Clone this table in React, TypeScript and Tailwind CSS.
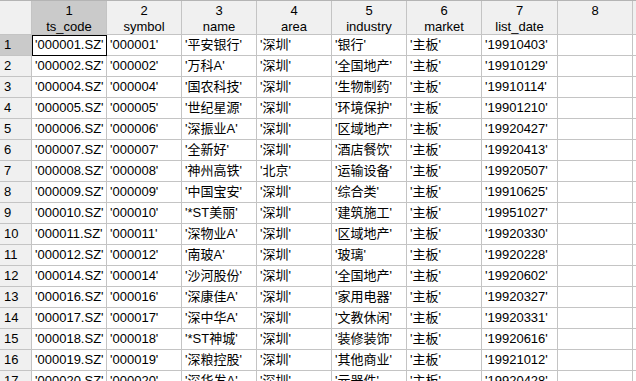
const rows: string[][] = [
  ["'000001.SZ'", "'000001'", "'平安银行'", "'深圳'", "'银行'", "'主板'", "'19910403'"],
  ["'000002.SZ'", "'000002'", "'万科A'", "'深圳'", "'全国地产'", "'主板'", "'19910129'"],
  ["'000004.SZ'", "'000004'", "'国农科技'", "'深圳'", "'生物制药'", "'主板'", "'19910114'"],
  ["'000005.SZ'", "'000005'", "'世纪星源'", "'深圳'", "'环境保护'", "'主板'", "'19901210'"],
  ["'000006.SZ'", "'000006'", "'深振业A'", "'深圳'", "'区域地产'", "'主板'", "'19920427'"],
  ["'000007.SZ'", "'000007'", "'全新好'", "'深圳'", "'酒店餐饮'", "'主板'", "'19920413'"],
  ["'000008.SZ'", "'000008'", "'神州高铁'", "'北京'", "'运输设备'", "'主板'", "'19920507'"],
  ["'000009.SZ'", "'000009'", "'中国宝安'", "'深圳'", "'综合类'", "'主板'", "'19910625'"],
  ["'000010.SZ'", "'000010'", "'*ST美丽'", "'深圳'", "'建筑施工'", "'主板'", "'19951027'"],
  ["'000011.SZ'", "'000011'", "'深物业A'", "'深圳'", "'区域地产'", "'主板'", "'19920330'"],
  ["'000012.SZ'", "'000012'", "'南玻A'", "'深圳'", "'玻璃'", "'主板'", "'19920228'"],
  ["'000014.SZ'", "'000014'", "'沙河股份'", "'深圳'", "'全国地产'", "'主板'", "'19920602'"],
  ["'000016.SZ'", "'000016'", "'深康佳A'", "'深圳'", "'家用电器'", "'主板'", "'19920327'"],
  ["'000017.SZ'", "'000017'", "'深中华A'", "'深圳'", "'文教休闲'", "'主板'", "'19920331'"],
  ["'000018.SZ'", "'000018'", "'*ST神城'", "'深圳'", "'装修装饰'", "'主板'", "'19920616'"],
  ["'000019.SZ'", "'000019'", "'深粮控股'", "'深圳'", "'其他商业'", "'主板'", "'19921012'"],
  ["'000020.SZ'", "'000020'", "'深华发A'", "'深圳'", "'元器件'", "'主板'", "'19920428'"],
];

const cols = ["ts_code", "symbol", "name", "area", "industry", "market", "list_date", ""];
const widths = ["w-[75px]", "w-[75px]", "w-[75px]", "w-[75px]", "w-[75px]", "w-[75px]", "w-[76px]", "w-[75px]"];

export default function App() {
  return (
    <div
      className="w-[636px] h-[381px] overflow-hidden bg-white text-[13px] text-black"
      style={{ fontFamily: '"Liberation Sans", "Noto Sans CJK SC", sans-serif' }}
    >
      {/* header */}
      <div className="flex h-[35px] border-t border-[#b4b4b4] bg-[#f0f0f0]">
        <div className="w-[32px] shrink-0 border-r border-b border-[#c4c4c4]"></div>
        {cols.map((c, i) => (
          <div
            key={i}
            className={`${widths[i]} shrink-0 border-r border-b border-[#c4c4c4] text-center leading-[16px] pt-[2px] ${i === 0 ? "bg-[#cacaca]" : ""}`}
          >
            <div>{i + 1}</div>
            <div>{c}</div>
          </div>
        ))}
        <div className="flex-1 border-b border-[#c4c4c4]"></div>
      </div>

      {/* body */}
      {rows.map((r, ri) => (
        <div key={ri} className="flex h-[21px]">
          <div
            className={`w-[32px] shrink-0 border-r border-b border-[#c4c4c4] pl-[4px] leading-[20px] ${ri === 0 ? "bg-[#cacaca]" : "bg-[#f0f0f0]"}`}
          >
            {ri + 1}
          </div>
          {[...r, ""].map((v, ci) => (
            <div
              key={ci}
              className={`${widths[ci]} shrink-0 border-r border-b border-[#c4c4c4] pl-[3px] leading-[20px] whitespace-nowrap overflow-hidden ${ri === 0 && ci === 0 ? "outline outline-1 outline-black -outline-offset-1" : ""}`}
            >
              {v}
            </div>
          ))}
          <div className="flex-1 border-b border-[#c4c4c4]"></div>
        </div>
      ))}
    </div>
  );
}
